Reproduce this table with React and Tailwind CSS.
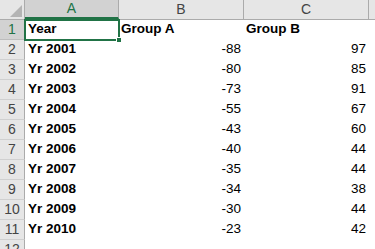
import React from 'react';

const rows = [
  ['Yr 2001', -88, 97],
  ['Yr 2002', -80, 85],
  ['Yr 2003', -73, 91],
  ['Yr 2004', -55, 67],
  ['Yr 2005', -43, 60],
  ['Yr 2006', -40, 44],
  ['Yr 2007', -35, 44],
  ['Yr 2008', -34, 38],
  ['Yr 2009', -30, 44],
  ['Yr 2010', -23, 42],
];

const font = { fontFamily: '"Liberation Sans", Arial, sans-serif' };

function RowHead({ n, active }) {
  return (
    <div
      className={`w-[25px] h-[20px] shrink-0 flex items-center justify-center text-[14px] border-r border-b ${
        active ? 'bg-[#d2d2d2] text-[#217346] border-r-[#217346] border-b-[#bdbdbd]' : 'bg-[#e6e6e6] text-[#444] border-r-[#ababab] border-b-[#d0d0d0]'
      }`}
    >
      {n}
    </div>
  );
}

export default function App() {
  return (
    <div className="w-[375px] h-[249px] overflow-hidden bg-white text-black relative" style={font}>
      {/* column headers */}
      <div className="flex h-[20px] border-b border-[#ababab]">
        <div className="w-[25px] shrink-0 bg-[#e6e6e6] border-r border-[#ababab] relative">
          <svg className="absolute right-[2px] bottom-[2px]" width="12" height="12" viewBox="0 0 12 12">
            <polygon points="12,0 12,12 0,12" fill="#b4b4b4" />
          </svg>
        </div>
        <div className="w-[94px] shrink-0 bg-[#d2d2d2] text-[#217346] text-[14px] flex items-center justify-center border-r border-[#ababab] border-b-2 border-b-[#217346]">A</div>
        <div className="w-[125px] shrink-0 bg-[#e6e6e6] text-[#444] text-[14px] flex items-center justify-center border-r border-[#ababab]">B</div>
        <div className="w-[125px] shrink-0 bg-[#e6e6e6] text-[#444] text-[14px] flex items-center justify-center border-r border-[#ababab]">C</div>
        <div className="flex-1 bg-[#e6e6e6]" />
      </div>

      {/* row 1 */}
      <div className="flex h-[20px]">
        <RowHead n={1} active />
        <div className="w-[94px] shrink-0 font-bold text-[13.5px] pl-[3px] flex items-end pb-[1px]">Year</div>
        <div className="w-[125px] shrink-0 font-bold text-[13.5px] pl-[2px] flex items-end pb-[1px]">Group A</div>
        <div className="w-[125px] shrink-0 font-bold text-[13.5px] pl-[2px] flex items-end pb-[1px]">Group B</div>
      </div>

      {rows.map(([year, a, b], i) => (
        <div key={year} className="flex h-[20px]">
          <RowHead n={i + 2} />
          <div className="w-[94px] shrink-0 font-bold text-[13.5px] pl-[3px] flex items-end pb-[1px]">{year}</div>
          <div className="w-[125px] shrink-0 text-[13.5px] pr-[3px] flex items-end justify-end pb-[1px]">{a}</div>
          <div className="w-[125px] shrink-0 text-[13.5px] pr-[3px] flex items-end justify-end pb-[1px]">{b}</div>
        </div>
      ))}

      <div className="flex h-[20px]">
        <RowHead n={12} />
      </div>

      {/* selection box over A1 */}
      <div className="absolute left-[24px] top-[19px] w-[96px] h-[22px] border-2 border-[#217346]">
        <div className="absolute right-[-4px] bottom-[-4px] w-[6px] h-[6px] bg-[#217346] border border-white" />
      </div>
    </div>
  );
}
